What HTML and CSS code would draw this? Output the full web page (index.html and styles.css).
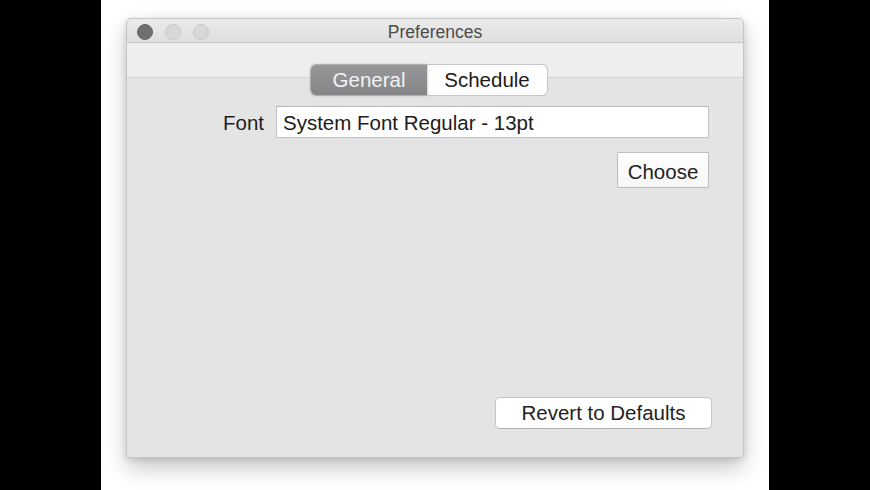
FILE: index.html
```html
<!DOCTYPE html>
<html>
<head>
<meta charset="utf-8">
<title>Preferences</title>
<link rel="stylesheet" href="styles.css">
</head>
<body>
<div class="stage">
  <div class="window">
    <div class="titlebar">
      <div class="lights">
        <span class="light light-close"></span>
        <span class="light"></span>
        <span class="light"></span>
      </div>
      <div class="title">Preferences</div>
      <div class="spacer"></div>
    </div>
    <div class="content">
      <div class="tabs">
        <div class="segmented">
          <div class="seg seg-active">General</div>
          <div class="seg">Schedule</div>
        </div>
      </div>
      <div class="font-row">
        <label class="label">Font</label>
        <div class="field">System Font Regular - 13pt</div>
      </div>
      <div class="choose-row">
        <button class="btn-square">Choose</button>
      </div>
      <div class="revert-row">
        <button class="btn-round">Revert to Defaults</button>
      </div>
    </div>
  </div>
</div>
</body>
</html>
```

FILE: styles.css
```css
html, body {
  margin: 0;
  padding: 0;
  background: #000;
  height: 490px;
  overflow: hidden;
}
body {
  display: flex;
  justify-content: center;
  font-family: "Liberation Sans", Arial, sans-serif;
}
.stage {
  width: 668px;
  height: 490px;
  background: #fff;
  display: flex;
  justify-content: flex-start;
  padding: 18px 0 0 25px;
  box-sizing: border-box;
}
.window {
  width: 618px;
  height: 440px;
  box-sizing: border-box;
  border: 1px solid #c4c4c4;
  border-radius: 5px;
  overflow: hidden;
  display: flex;
  flex-direction: column;
  background: #e4e4e4;
  box-shadow: 0 10px 22px rgba(0, 0, 0, 0.22), 0 2px 6px rgba(0, 0, 0, 0.12);
}
.titlebar {
  height: 24px;
  box-sizing: border-box;
  padding-top: 2px;
  display: grid;
  grid-template-columns: 1fr auto 1fr;
  align-items: center;
  background: linear-gradient(#ebebeb, #dedede);
  border-bottom: 1px solid #c8c8c8;
}
.lights {
  display: flex;
  gap: 12px;
  padding-left: 10px;
}
.light {
  width: 16px;
  height: 16px;
  border-radius: 50%;
  box-sizing: border-box;
  background: #d8d8d8;
  border: 1px solid #c9c9c9;
}
.light-close {
  background: #6f6f6f;
  border-color: #666;
}
.title {
  font-size: 17.5px;
  color: #4b4b4b;
  line-height: 20px;
}
.content {
  flex: 1;
  display: flex;
  flex-direction: column;
  background: linear-gradient(#eeeeee 0, #eeeeee 34px, #d6d6d6 34px, #d6d6d6 35px, #e4e4e4 35px);
}
.tabs {
  margin-top: 22px;
  padding-left: 184px;
  display: flex;
}
.segmented {
  display: flex;
  height: 30px;
  border-radius: 5px;
  background: #fff;
  box-shadow: 0 0 0 1px #c6c6c6, 0 1px 1px rgba(0, 0, 0, 0.08);
}
.seg {
  font-size: 20.5px;
  line-height: 30px;
  color: #1b1b1b;
  text-align: center;
}
.seg:first-child {
  width: 116px;
}
.seg:last-child {
  width: 120px;
}
.seg-active {
  color: #f3f3f3;
  background: linear-gradient(#979799, #858587);
  border-radius: 5px 0 0 5px;
  box-shadow: 0 0 3px rgba(0, 0, 0, 0.35);
}
.font-row {
  margin-top: 11px;
  display: flex;
  align-items: baseline;
  padding-right: 34px;
}
.label {
  width: 137px;
  text-align: right;
  font-size: 20.5px;
  color: #1e1e1e;
}
.field {
  margin-left: 12px;
  flex: 1;
  height: 32px;
  box-sizing: border-box;
  background: #fff;
  border: 1px solid #c3c3c3;
  border-top-color: #b5b5b5;
  padding: 2px 0 0 6px;
  font-size: 20.5px;
  line-height: 28px;
  color: #1b1b1b;
}
.choose-row {
  margin-top: 14px;
  display: flex;
  justify-content: flex-end;
  padding-right: 34px;
}
.btn-square {
  width: 92px;
  height: 36px;
  box-sizing: border-box;
  border: 1px solid #bdbdbd;
  border-radius: 1px;
  background: linear-gradient(#ffffff, #f6f6f6);
  font-family: "Liberation Sans", Arial, sans-serif;
  font-size: 20.5px;
  color: #222;
  padding: 3px 0 0;
}
.revert-row {
  margin-top: auto;
  padding: 0 31px 28px 0;
  display: flex;
  justify-content: flex-end;
}
.btn-round {
  width: 217px;
  height: 32px;
  box-sizing: border-box;
  border: 1px solid #c3c3c3;
  border-bottom-color: #b0b0b0;
  border-radius: 5px;
  background: #fff;
  font-family: "Liberation Sans", Arial, sans-serif;
  font-size: 20.5px;
  color: #222;
  padding: 0;
}
```
